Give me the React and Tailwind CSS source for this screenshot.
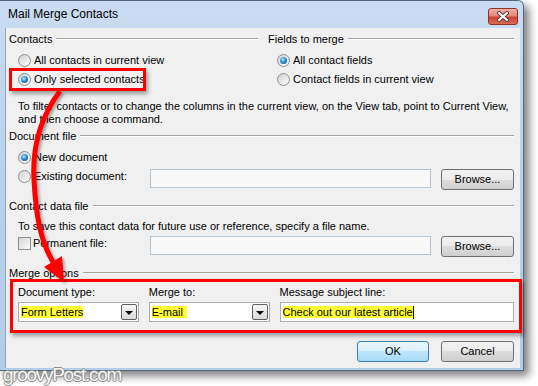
import React from "react";

function GroupHeader({ label, className = "" }) {
  return (
    <div className={`h-[16px] flex items-center ${className}`}>
      <span className="whitespace-nowrap">{label}</span>
      <div className="flex-1 ml-[4px] h-[2px] border-t border-[#a4a4a4] border-b border-b-white" />
    </div>
  );
}

function Radio({ checked }) {
  return (
    <span className="w-[13px] h-[13px] rounded-full border border-[#8c8f94] bg-gradient-to-br from-[#d2d2d2] to-[#fcfcfc] flex items-center justify-center shrink-0">
      {checked && (
        <span className="w-[7px] h-[7px] rounded-full bg-[radial-gradient(circle_at_40%_35%,#b4e4ff_0%,#2d8fd8_45%,#0a4a8c_100%)]" />
      )}
    </span>
  );
}

function RadioRow({ checked, label, className = "" }) {
  return (
    <div className={`h-[16px] flex items-center pl-[9px] gap-[3px] ${className}`}>
      <Radio checked={checked} />
      <span className="whitespace-nowrap">{label}</span>
    </div>
  );
}

function Button({ children, primary, className = "" }) {
  return (
    <div
      className={`h-[21px] rounded-[3px] border flex items-center justify-center ${
        primary
          ? "border-[#3c7fb1] bg-[linear-gradient(#eaf6fd_0%,#d9f0fc_50%,#bee6fd_50%,#a7d9f5_100%)]"
          : "border-[#707070] bg-[linear-gradient(#f2f2f2_0%,#ebebeb_50%,#dddddd_50%,#cfcfcf_100%)]"
      } ${className}`}
    >
      {children}
    </div>
  );
}

function Combo({ value, className = "", extra = "" }) {
  return (
    <div className={`h-[20px] border border-[#abadb3] bg-white flex items-center pl-[2px] ${className}`}>
      <span className={`bg-[#ffff33] leading-[12px] whitespace-nowrap ${extra}`}>{value}</span>
      <div className="ml-auto mr-[1px] w-[16px] h-[16px] border border-[#5f5f5f] rounded-[2px] bg-gradient-to-b from-[#f6f6f6] to-[#dadada] flex items-center justify-center">
        <span className="w-0 h-0 border-l-[4px] border-r-[4px] border-t-[4px] border-l-transparent border-r-transparent border-t-black mt-[1px]" />
      </div>
    </div>
  );
}

export default function App() {
  return (
    <div className="relative w-[538px] h-[386px] bg-white overflow-hidden text-[11px] leading-[13px] text-black font-['Liberation_Sans',Arial,sans-serif]">
      {/* window */}
      <div className="w-[524px] h-[371px] rounded-tr-[6px] border-t border-r border-b border-[#55687e] bg-gradient-to-b from-[#cadcf1] via-[#b8d0ea] to-[#b3cce8] shadow-[5px_5px_9px_rgba(0,0,0,0.5)] flex flex-col">
        <div className="h-[27px] flex items-center pl-[8px] pr-[5px]">
          <span className="text-[12px]">Mail Merge Contacts</span>
          <div className="ml-auto mt-[4px] w-[30px] h-[17px] rounded-[3px] border border-[#8a3427] bg-[linear-gradient(#efb0a4_0%,#e3887a_45%,#cc4532_55%,#dc6a55_100%)] flex items-center justify-center">
            <svg width="14" height="11" viewBox="0 0 14 11">
              <path d="M3 2 L11 9 M11 2 L3 9" stroke="#5a3a36" strokeWidth="4" strokeLinecap="round" />
              <path d="M3 2 L11 9 M11 2 L3 9" stroke="#ffffff" strokeWidth="2.2" strokeLinecap="round" />
            </svg>
          </div>
        </div>

        {/* client area */}
        <div className="ml-[5px] mr-[3px] h-[340px] bg-[#f0f0f0] border-l border-[#8ea4bd] pl-[3px] pr-[6px] pt-[3px] flex flex-col">
          <div className="grid grid-cols-[249px_246px] gap-x-[10px]">
            <div>
              <GroupHeader label="Contacts" />
              <RadioRow className="mt-[5px]" label="All contacts in current view" />
              <RadioRow className="mt-[3px]" checked label="Only selected contacts" />
            </div>
            <div>
              <GroupHeader label="Fields to merge" />
              <RadioRow className="mt-[5px]" checked label="All contact fields" />
              <RadioRow className="mt-[3px]" label="Contact fields in current view" />
            </div>
          </div>

          <div className="mt-[13px] pl-[9px] whitespace-nowrap">
            To filter contacts or to change the columns in the current view, on the View tab, point to Current View,
            <br />
            and then choose a command.
          </div>

          <GroupHeader className="mt-[2px]" label="Document file" />
          <RadioRow className="mt-[5px]" checked label="New document" />
          <div className="mt-[4px] flex items-start">
            <div className="w-[141px] h-[14px] flex items-center pl-[9px] gap-[3px]">
              <Radio />
              <span className="whitespace-nowrap">Existing document:</span>
            </div>
            <div className="w-[281px] h-[19px] border border-[#b4c2d3] bg-[#f8f8f8]" />
            <Button className="ml-[10px] w-[73px]">Browse...</Button>
          </div>

          <GroupHeader className="mt-[8px]" label="Contact data file" />
          <div className="mt-[6px] pl-[9px] whitespace-nowrap">
            To save this contact data for future use or reference, specify a file name.
          </div>
          <div className="mt-[3px] flex items-start">
            <div className="w-[141px] h-[15px] flex items-center pl-[9px] gap-[2px]">
              <span className="w-[13px] h-[13px] border border-[#8e8f8f] bg-gradient-to-br from-[#d6d6d6] to-[#fbfbfb] shrink-0" />
              <span className="whitespace-nowrap">Permanent file:</span>
            </div>
            <div className="w-[281px] h-[19px] border border-[#b4c2d3] bg-[#f8f8f8]" />
            <Button className="ml-[10px] w-[73px]">Browse...</Button>
          </div>

          <GroupHeader className="mt-[8px]" label="Merge options" />
          <div className="mt-[5px] h-[13px] pl-[9px] flex gap-[10px]">
            <span className="w-[121px]">Document type:</span>
            <span className="w-[121px]">Merge to:</span>
            <span className="w-[235px]">Message subject line:</span>
          </div>
          <div className="mt-[3px] pl-[9px] flex gap-[10px]">
            <Combo className="w-[121px]" value="Form Letters" />
            <Combo className="w-[121px]" value="E-mail" extra="pr-[4px]" />
            <div className="w-[235px] h-[20px] border border-[#abadb3] bg-white flex items-center pl-[2px]">
              <span className="bg-[#ffff33] leading-[12px] whitespace-nowrap">Check out our latest article</span>
              <span className="w-px h-[13px] bg-black" />
            </div>
          </div>

          <div className="mt-[19px] flex justify-end gap-[12px]">
            <Button primary className="w-[72px]">OK</Button>
            <Button className="w-[73px]">Cancel</Button>
          </div>
        </div>
      </div>

      {/* watermark */}
      <div className="-mt-[2px] pl-[3px] text-[19px] leading-[12px] tracking-[-1.3px] text-[#f6f6f6] [text-shadow:1px_0_#8c8c8c,-1px_0_#8c8c8c,0_1px_#8c8c8c,0_-1px_#8c8c8c]">
        groovyPost.com
      </div>

      {/* annotations */}
      <div className="absolute left-[9px] top-[68px] w-[137px] h-[23px] border-[3px] border-[#ff0000] shadow-[2px_3px_4px_rgba(0,0,0,0.35)]" />
      <div className="absolute left-[10px] top-[279px] w-[512px] h-[54px] border-[3px] border-[#ff0000] shadow-[2px_3px_4px_rgba(0,0,0,0.35)]" />
      <svg className="absolute left-0 top-0 pointer-events-none" width="538" height="386" viewBox="0 0 538 386">
        <defs>
          <filter id="sh" x="-20%" y="-20%" width="140%" height="140%">
            <feDropShadow dx="2" dy="2" stdDeviation="1.5" floodColor="#000" floodOpacity="0.35" />
          </filter>
        </defs>
        <g filter="url(#sh)">
          <path d="M60 91 C42 115, 32 145, 34 180 C36 215, 40 240, 53 262" stroke="#ff0000" strokeWidth="5" fill="none" />
          <polygon points="64,282 44,267 62,256" fill="#ff0000" />
        </g>
      </svg>
    </div>
  );
}
